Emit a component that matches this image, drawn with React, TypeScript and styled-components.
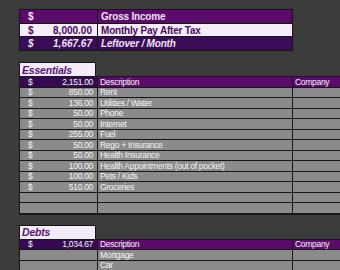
import React from 'react';
import styled, { createGlobalStyle } from 'styled-components';

const GlobalStyle = createGlobalStyle`
  html, body {
    margin: 0;
    padding: 0;
    background: #3b3b3b;
    overflow: hidden;
  }
`;

const Page = styled.div`
  width: 340px;
  height: 270px;
  overflow: hidden;
  padding: 9px 0 0 19px;
  box-sizing: border-box;
  font-family: 'Liberation Sans', Arial, sans-serif;
`;

/* ---------- summary block at the top ---------- */

const Summary = styled.div`
  display: grid;
  grid-template-columns: 77px 194px;
  grid-auto-rows: 12.7px;
  gap: 1px;
  width: fit-content;
  background: #141414;
  border: 1px solid #141414;
`;

type Tone = 'income' | 'pay' | 'left';

const toneBg: Record<Tone, string> = {
  income: '#5c0a6c',
  pay: '#f5edf8',
  left: '#3a0b56',
};

const toneInk: Record<Tone, string> = {
  income: '#efe2f4',
  pay: '#4b0b62',
  left: '#efe2f4',
};

const SummaryCell = styled.div<{ $tone: Tone; $amount?: boolean }>`
  display: flex;
  align-items: center;
  justify-content: ${(p) => (p.$amount ? 'space-between' : 'flex-start')};
  padding: ${(p) => (p.$amount ? '0 5px 0 8px' : '0 3px')};
  background: ${(p) => toneBg[p.$tone]};
  color: ${(p) => toneInk[p.$tone]};
  font-size: 10px;
  font-weight: bold;
  font-style: ${(p) => (p.$tone === 'left' ? 'italic' : 'normal')};
  letter-spacing: ${(p) => (p.$amount ? '0' : '-0.2px')};
  white-space: nowrap;
`;

/* ---------- budget sheets ---------- */

const Section = styled.section<{ $gap: number }>`
  margin-top: ${(p) => p.$gap}px;
`;

const SheetTitle = styled.div`
  width: 77px;
  height: 14px;
  display: flex;
  align-items: center;
  padding-left: 2px;
  box-sizing: border-box;
  background: #f4ebf8;
  border: 1px solid #141414;
  border-bottom: none;
  color: #561474;
  font-size: 10.5px;
  font-weight: bold;
  font-style: italic;
  letter-spacing: -0.2px;
`;

const Sheet = styled.div`
  display: grid;
  grid-template-columns: 77px 194px 70px;
  grid-auto-rows: 9.5px;
  gap: 1px;
  width: fit-content;
  background: #171717;
  border: 1px solid #171717;
  border-bottom-width: 2px;
`;

type Kind = 'total' | 'head' | 'plain';

const cellBg: Record<Kind, string> = {
  total: '#350a52',
  head: '#5d0a6d',
  plain: '#8b8b8b',
};

const Cell = styled.div<{ $kind: Kind; $amount?: boolean }>`
  display: flex;
  align-items: center;
  justify-content: ${(p) => (p.$amount ? 'space-between' : 'flex-start')};
  padding: ${(p) => (p.$amount ? '0 4px 0 8px' : '0 2px')};
  background: ${(p) => cellBg[p.$kind]};
  color: #f4f4f4;
  font-size: 8.5px;
  letter-spacing: -0.3px;
  line-height: 1;
  white-space: nowrap;
  overflow: hidden;
`;

interface Line {
  amount?: string;
  label?: string;
}

interface SheetProps {
  title: string;
  total: string;
  lines: Line[];
  gap: number;
}

const BudgetSheet: React.FC<SheetProps> = ({ title, total, lines, gap }) => (
  <Section $gap={gap}>
    <SheetTitle>{title}</SheetTitle>
    <Sheet>
      <Cell $kind="total" $amount>
        <span>$</span>
        <span>{total}</span>
      </Cell>
      <Cell $kind="head">Description</Cell>
      <Cell $kind="head">Company</Cell>
      {lines.map((line, i) => (
        <React.Fragment key={i}>
          <Cell $kind="plain" $amount>
            {line.amount && (
              <>
                <span>$</span>
                <span>{line.amount}</span>
              </>
            )}
          </Cell>
          <Cell $kind="plain">{line.label}</Cell>
          <Cell $kind="plain" />
        </React.Fragment>
      ))}
    </Sheet>
  </Section>
);

const essentials: Line[] = [
  { amount: '850.00', label: 'Rent' },
  { amount: '136.00', label: 'Utilities / Water' },
  { amount: '50.00', label: 'Phone' },
  { amount: '50.00', label: 'Internet' },
  { amount: '255.00', label: 'Fuel' },
  { amount: '50.00', label: 'Rego + Insurance' },
  { amount: '50.00', label: 'Health Insurance' },
  { amount: '100.00', label: 'Health Appointments (out of pocket)' },
  { amount: '100.00', label: 'Pets / Kids' },
  { amount: '510.00', label: 'Groceries' },
  {},
  {},
];

const debts: Line[] = [{ label: 'Mortgage' }, { label: 'Car' }];

const App: React.FC = () => (
  <>
    <GlobalStyle />
    <Page>
      <Summary>
        <SummaryCell $tone="income" $amount>
          <span>$</span>
        </SummaryCell>
        <SummaryCell $tone="income">Gross Income</SummaryCell>
        <SummaryCell $tone="pay" $amount>
          <span>$</span>
          <span>8,000.00</span>
        </SummaryCell>
        <SummaryCell $tone="pay">Monthly Pay After Tax</SummaryCell>
        <SummaryCell $tone="left" $amount>
          <span>$</span>
          <span>1,667.67</span>
        </SummaryCell>
        <SummaryCell $tone="left">Leftover / Month</SummaryCell>
      </Summary>

      <BudgetSheet title="Essentials" total="2,151.00" lines={essentials} gap={11} />
      <BudgetSheet title="Debts" total="1,034.67" lines={debts} gap={10} />
    </Page>
  </>
);

export default App;
